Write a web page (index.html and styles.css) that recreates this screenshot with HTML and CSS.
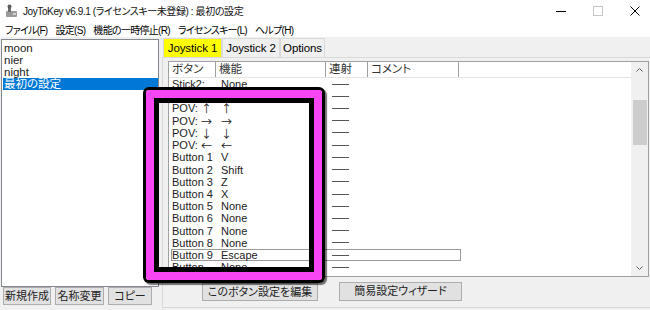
FILE: index.html
```html
<!DOCTYPE html>
<html lang="ja">
<head>
    <meta charset="UTF-8">
    <title>JoyToKey</title>
    <link rel="stylesheet" href="styles.css">
</head>
<body>
    <div class="window">
        <div class="titlebar">
            <svg class="app-icon" width="14" height="14" viewBox="0 0 14 14">
                <rect x="1" y="7" width="11" height="6" rx="1" fill="#9a9a9a"/>
                <rect x="3" y="2" width="3" height="6" fill="#6d6d6d"/>
                <circle cx="4.5" cy="2.5" r="2" fill="#5a5a5a"/>
                <rect x="8" y="9" width="3" height="2" fill="#d0d0d0"/>
            </svg>
            <span class="title">JoyToKey v6.9.1 (ライセンスキー未登録) : 最初の設定</span>
            <div class="controls">
                <svg width="10" height="10" viewBox="0 0 10 10"><path d="M0 5.5h10" stroke="#000" stroke-width="1"/></svg>
                <svg width="10" height="10" viewBox="0 0 10 10"><rect x="0.5" y="0.5" width="9" height="9" fill="none" stroke="#c8c8c8"/></svg>
                <svg width="10" height="10" viewBox="0 0 10 10"><path d="M0.5 0.5l9 9M9.5 0.5l-9 9" stroke="#000" stroke-width="1"/></svg>
            </div>
        </div>

        <div class="menubar">
            <span>ファイル(F)</span>
            <span>設定(S)</span>
            <span>機能の一時停止(R)</span>
            <span>ライセンスキー(L)</span>
            <span>ヘルプ(H)</span>
        </div>

        <div class="main">
            <div class="side">
                <ul class="configs">
                    <li>moon</li>
                    <li>nier</li>
                    <li>night</li>
                    <li class="selected">最初の設定</li>
                </ul>
                <div class="side-buttons">
                    <button class="btn btn-new">新規作成</button>
                    <button class="btn btn-rename">名称変更</button>
                    <button class="btn btn-copy">コピー</button>
                </div>
            </div>

            <div class="content">
                <div class="tabs">
                    <div class="tab tab-1 active">Joystick 1</div>
                    <div class="tab tab-2">Joystick 2</div>
                    <div class="tab tab-3">Options</div>
                </div>
                <div class="panel">
                    <div class="listview">
                        <div class="list-body">
                            <div class="list-header">
                                <div class="col col-btn">ボタン</div>
                                <div class="col col-func">機能</div>
                                <div class="col col-rep">連射</div>
                                <div class="col col-note">コメント</div>
                                <div class="col col-rest"></div>
                            </div>
                            <div class="row"><div class="col col-btn">Stick2:</div><div class="col col-func">None</div><div class="col col-rep"><span class="dash"></span></div></div>
                            <div class="row"><div class="col col-btn">Stick2: <span class="arw">↓</span></div><div class="col col-func">None</div><div class="col col-rep"><span class="dash"></span></div></div>
                            <div class="row"><div class="col col-btn">POV: <span class="arw">↑</span></div><div class="col col-func"><span class="arw">↑</span></div><div class="col col-rep"><span class="dash"></span></div></div>
                            <div class="row"><div class="col col-btn">POV: <span class="arw">→</span></div><div class="col col-func"><span class="arw">→</span></div><div class="col col-rep"><span class="dash"></span></div></div>
                            <div class="row"><div class="col col-btn">POV: <span class="arw">↓</span></div><div class="col col-func"><span class="arw">↓</span></div><div class="col col-rep"><span class="dash"></span></div></div>
                            <div class="row"><div class="col col-btn">POV: <span class="arw">←</span></div><div class="col col-func"><span class="arw">←</span></div><div class="col col-rep"><span class="dash"></span></div></div>
                            <div class="row"><div class="col col-btn">Button 1</div><div class="col col-func">V</div><div class="col col-rep"><span class="dash"></span></div></div>
                            <div class="row"><div class="col col-btn">Button 2</div><div class="col col-func">Shift</div><div class="col col-rep"><span class="dash"></span></div></div>
                            <div class="row"><div class="col col-btn">Button 3</div><div class="col col-func">Z</div><div class="col col-rep"><span class="dash"></span></div></div>
                            <div class="row"><div class="col col-btn">Button 4</div><div class="col col-func">X</div><div class="col col-rep"><span class="dash"></span></div></div>
                            <div class="row"><div class="col col-btn">Button 5</div><div class="col col-func">None</div><div class="col col-rep"><span class="dash"></span></div></div>
                            <div class="row"><div class="col col-btn">Button 6</div><div class="col col-func">None</div><div class="col col-rep"><span class="dash"></span></div></div>
                            <div class="row"><div class="col col-btn">Button 7</div><div class="col col-func">None</div><div class="col col-rep"><span class="dash"></span></div></div>
                            <div class="row"><div class="col col-btn">Button 8</div><div class="col col-func">None</div><div class="col col-rep"><span class="dash"></span></div></div>
                            <div class="row focus"><div class="col col-btn">Button 9</div><div class="col col-func">Escape</div><div class="col col-rep"><span class="dash"></span></div><div class="col col-note"></div></div>
                            <div class="row"><div class="col col-btn">Button</div><div class="col col-func">None</div><div class="col col-rep"><span class="dash"></span></div></div>
                        </div>
                        <div class="scrollbar">
                            <svg class="arrow" width="17" height="17" viewBox="0 0 17 17"><path d="M5.5 9.5l3-3 3 3" fill="none" stroke="#606060"/></svg>
                            <div class="track"><div class="thumb"></div></div>
                            <svg class="arrow" width="17" height="17" viewBox="0 0 17 17"><path d="M5.5 7.5l3 3 3-3" fill="none" stroke="#606060"/></svg>
                        </div>
                    </div>
                    <div class="panel-buttons">
                        <button class="btn btn-edit">このボタン設定を編集</button>
                        <button class="btn btn-wizard">簡易設定ウィザード</button>
                    </div>
                </div>
            </div>
        </div>

        <div class="mark"></div>
    </div>
</body>
</html>
```

FILE: styles.css
```css
body {
    margin: 0;
    padding: 0;
    background-color: #f0f0f0;
    font-family: "Liberation Sans", "Noto Sans CJK JP", sans-serif;
    font-size: 12px;
    font-feature-settings: "palt";
    color: #000;
}

.window {
    position: relative;
    width: 650px;
    height: 310px;
    overflow: hidden;
}

/* title + menu */
.titlebar {
    height: 21px;
    background: #fff;
    display: flex;
    align-items: center;
}

.app-icon {
    margin-left: 5px;
    margin-right: 4px;
}

.title {
    font-size: 10px;
    letter-spacing: -0.4px;
    color: #111;
    white-space: nowrap;
}

.controls {
    margin-left: auto;
    display: flex;
    gap: 27px;
    padding-right: 10px;
}

.menubar {
    height: 16px;
    background: #fff;
    display: flex;
    align-items: center;
    gap: 8px;
    padding-left: 5px;
    font-size: 10px;
    letter-spacing: -0.7px;
    white-space: nowrap;
}

.main {
    display: flex;
    height: 273px;
}

/* left side */
.side {
    width: 160px;
    display: flex;
    flex-direction: column;
}

.configs {
    list-style: none;
    margin: 2px 0 0 1px;
    padding: 2px 0 0 1px;
    width: 158px;
    height: 248px;
    box-sizing: border-box;
    background: #fff;
    border: 1px solid #828790;
}

.configs li {
    height: 12px;
    line-height: 12px;
    padding-left: 1px;
    font-size: 11.5px;
    color: #222;
}

.configs li.selected {
    background: #0078d7;
    color: #fff;
}

.side-buttons {
    display: flex;
    gap: 4px;
    padding-left: 3px;
}

.btn {
    font-family: "Liberation Sans", "Noto Sans CJK JP", sans-serif;
    font-feature-settings: "palt";
    font-size: 11px;
    height: 18px;
    padding: 0;
    white-space: nowrap;
    background: #e1e1e1;
    border: 1px solid #adadad;
    color: #222;
    line-height: 15px;
}

.btn-new { width: 48px; }
.btn-rename { width: 49px; }
.btn-copy { width: 44px; }

/* tabs */
.content {
    flex: 1;
    display: flex;
    flex-direction: column;
    margin-left: 2px;
}

.tabs {
    display: flex;
    height: 19px;
    margin-top: 1px;
    padding-left: 1px;
}

.tab {
    box-sizing: border-box;
    text-align: center;
    line-height: 18px;
    font-size: 11.5px;
    letter-spacing: -0.1px;
    white-space: nowrap;
    border: 1px solid #d9d9d9;
    border-bottom: none;
    background: #f0f0f0;
}

.tab-1 { width: 59px; }
.tab-2 { width: 58px; }
.tab-3 { width: 45px; }

.tab.active {
    background: #ffff00;
}

.panel {
    height: 251px;
    border: 1px solid #d9d9d9;
    border-right: none;
    padding: 3px 0 0 5px;
    box-sizing: border-box;
}

/* list view */
.listview {
    display: flex;
    width: 481px;
    height: 216px;
    box-sizing: border-box;
    border: 1px solid #a0a0a0;
    background: #fff;
}

.list-body {
    flex: 1;
    overflow: hidden;
}

.list-header {
    display: flex;
    height: 16px;
    line-height: 15px;
    font-size: 11.5px;
    box-sizing: border-box;
    border-bottom: 1px solid #e5e5e5;
    color: #333;
}

.list-header .col {
    border-right: 1px solid #a0a0a0;
    padding-left: 3px;
}

.col {
    box-sizing: border-box;
    white-space: nowrap;
    overflow: hidden;
}

.col-btn { width: 47px; }
.col-func { width: 110px; }
.col-rep { width: 42px; }
.col-note { width: 91px; }
.col-rest { flex: 1; border-right: none !important; }

.row {
    display: flex;
    width: 290px;
    height: 12.23px;
    line-height: 12px;
    font-size: 11px;
    box-sizing: border-box;
}

.row .col {
    padding-left: 3px;
    color: #222;
}

.row .col-func {
    padding-left: 5px;
}

.arw {
    display: inline-block;
    height: 12px;
    line-height: 12px;
    vertical-align: top;
    font-family: "Noto Sans CJK JP", sans-serif;
    font-size: 11px;
    color: #222;
}

.row .col-rep {
    display: flex;
    align-items: center;
    padding-left: 6px;
}

.dash {
    width: 17px;
    border-top: 1px solid #555;
}

.row.focus {
    margin-left: 2px;
    box-shadow: inset 0 0 0 1px #9a9a9a;
}

.row.focus .col-btn {
    width: 45px;
    padding-left: 1px;
}

/* scrollbar */
.scrollbar {
    width: 17px;
    display: flex;
    flex-direction: column;
    background: #f0f0f0;
}

.track {
    flex: 1;
}

.thumb {
    margin: 21px 1px 0 2px;
    height: 45px;
    background: #cdcdcd;
}

.panel-buttons {
    display: flex;
    gap: 21px;
    margin: 6px 0 0 34px;
}

.btn-edit { width: 116px; }
.btn-wizard { width: 123px; height: 19px; margin-top: -1px; }

/* annotation drawn over the list */
.mark {
    position: absolute;
    left: 146px;
    top: 90px;
    width: 176px;
    height: 190px;
    box-sizing: border-box;
    border: 8px solid #f846f4;
    border-radius: 3px;
    box-shadow: 0 0 0 3px #000, 2px 2px 1px 3px rgba(0, 0, 0, 0.55), inset 0 0 0 5px #000;
}
```
